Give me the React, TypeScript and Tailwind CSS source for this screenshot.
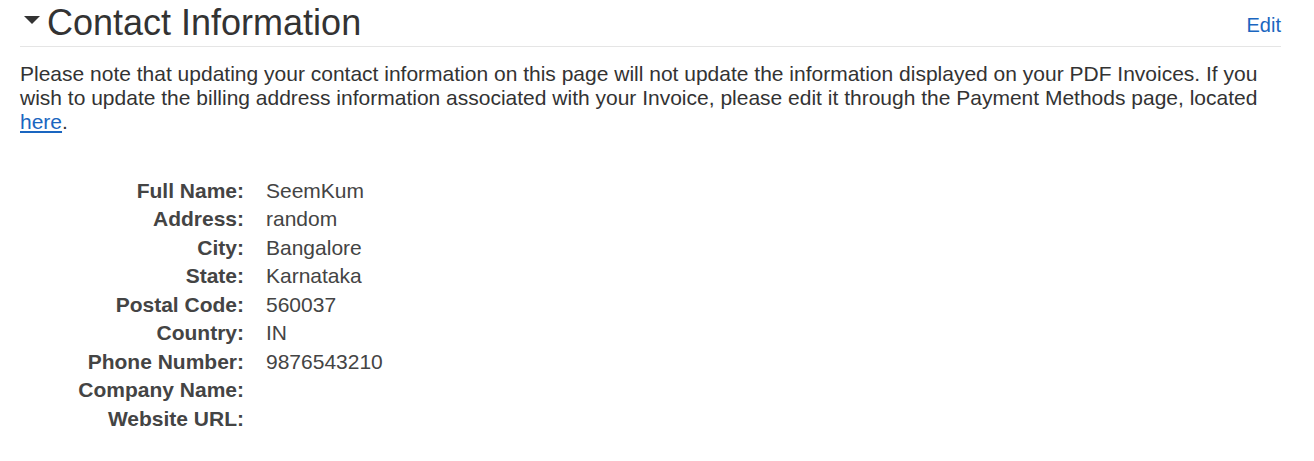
const rows: [string, string][] = [
    ["Full Name:", "SeemKum"],
    ["Address:", "random"],
    ["City:", "Bangalore"],
    ["State:", "Karnataka"],
    ["Postal Code:", "560037"],
    ["Country:", "IN"],
    ["Phone Number:", "9876543210"],
    ["Company Name:", ""],
    ["Website URL:", ""],
]

function App() {
    return (
        <div className="bg-white min-h-[461px] pl-[20px] pr-[33px] text-[#333] font-['Liberation_Sans',Arial,sans-serif]">
            <div className="h-[47px] flex items-end justify-between border-b border-[#e5e5e5] pb-[1px]">
                <div className="flex items-center">
                    <svg width="16" height="8" viewBox="0 0 16 8" className="ml-[4px] mr-[7px] mb-[6px]">
                        <path d="M0 0 L16 0 L8 8 Z" fill="#333" />
                    </svg>
                    <h2 className="text-[36px] leading-[44px] font-normal">Contact Information</h2>
                </div>
                <a className="text-[20px] leading-[24px] text-[#1a66c0] mb-[8px]">Edit</a>
            </div>

            <p className="text-[21px] leading-[24px] mt-[15px]">
                Please note that updating your contact information on this page will not update the information displayed on your PDF Invoices. If you wish to update the billing address information associated with your Invoice, please edit it through the Payment Methods page, located{" "}
                <a className="text-[#1a66c0] underline">here</a>.
            </p>

            <div className="mt-[42px] flex flex-col">
                {rows.map(([label, value]) => (
                    <div key={label} className="flex h-[28.5px] items-center text-[21px]">
                        <div className="w-[224px] text-right font-bold text-[#444]">{label}</div>
                        <div className="ml-[22px] text-[#444]">{value}</div>
                    </div>
                ))}
            </div>
        </div>
    );
}

export default App;
